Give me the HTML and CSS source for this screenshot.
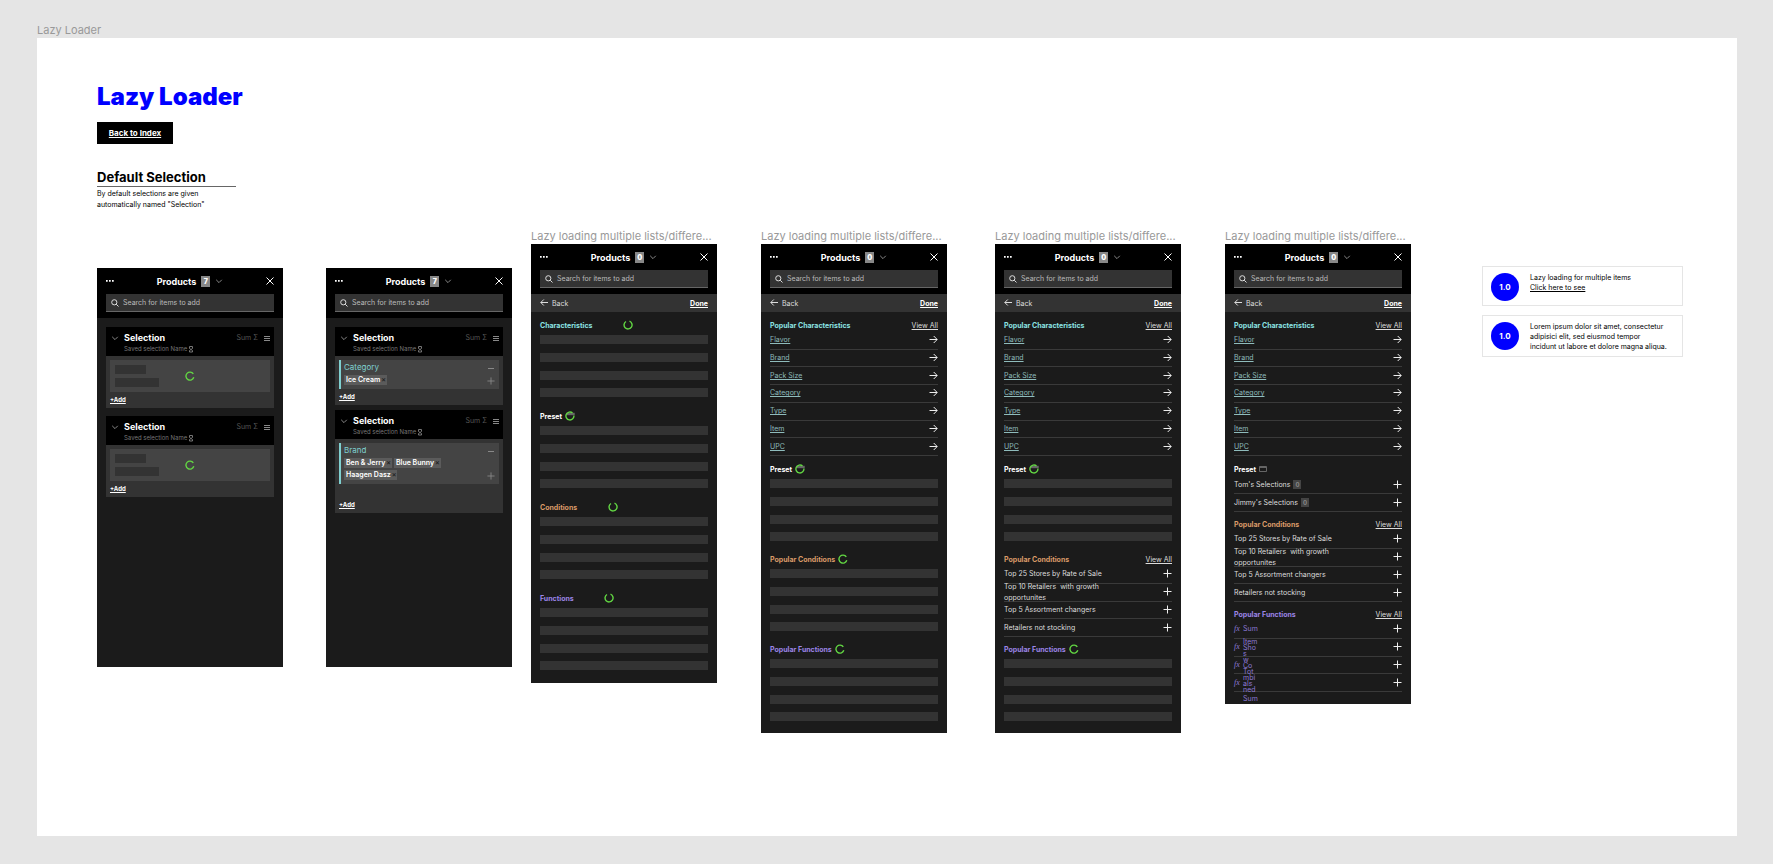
FILE: index.html
```html
<!DOCTYPE html>
<html lang="en">
  <head>
    <meta charset="UTF-8" />
    <meta name="viewport" content="width=device-width, initial-scale=1.0" />
    <title>Lazy Loader</title>
    <link rel="stylesheet" href="styles.css">
  </head>
  <body>
    <!-- Icons -->
    <svg class="sprite" aria-hidden="true">
      <symbol id="dots" viewBox="0 0 8 8"><path d="M0 3h1.700v1.700H0zM3 3h1.700v1.700H3zM6 3h1.700v1.700H6z" fill="currentColor" stroke="none" /></symbol>
      <symbol id="chevron" viewBox="0 0 8 8"><path d="M1.200 2.800 4 5.600l2.800-2.800" /></symbol>
      <symbol id="close" viewBox="0 0 8 8"><path d="M.5.5l7 7M7.500.5l-7 7" /></symbol>
      <symbol id="search" viewBox="0 0 8 8"><circle cx="3.300" cy="3.300" r="2.600" /><path d="M5.200 5.200 7.500 7.500" /></symbol>
      <symbol id="back" viewBox="0 0 8 8"><path d="M8 3.500H.8M3.800.5l-3 3 3 3" /></symbol>
      <symbol id="arrow" viewBox="0 0 9 9"><path d="M.5 4.500h7.500M4.700 1l3.500 3.500L4.700 8" /></symbol>
      <symbol id="plus" viewBox="0 0 9 9"><path d="M4.500.5v8M.5 4.500h8" /></symbol>
      <symbol id="minus" viewBox="0 0 8 8"><path d="M1 4.500h6" /></symbol>
      <symbol id="menu" viewBox="0 0 8 8"><path d="M1 2.500h6M1 4.500h6M1 6.500h6" /></symbol>
      <symbol id="lock" viewBox="0 0 8 8"><path d="M2.500 1.500h3v2l-3 2v1.500h3V5.500l-3-2z" /></symbol>
      <symbol id="window" viewBox="0 0 8 8"><path d="M.5 1.500h7v5h-7zM.5 2.500h7" /></symbol>
      <symbol id="ring-top" viewBox="0 0 10 10"><path d="M6.500 1.200A4 4 0 1 1 3 1.500" /></symbol>
      <symbol id="ring-side" viewBox="0 0 10 10"><path d="M8.800 6.300A4 4 0 1 1 8.300 2.900" /></symbol>
      <symbol id="ring-window" viewBox="0 0 10 10"><path class="dim" d="M2 2.500h7v1H2z" /><path d="M8.900 4.500A4 4 0 1 1 7.500 1.900" /></symbol>
    </svg>

    <p class="frame-label">Lazy Loader</p>
    <main class="board">
      <header class="intro">
        <h1>Lazy Loader</h1>
        <a class="index-link" href="#">Back to Index</a>
        <h2>Default Selection</h2>
        <p>By default selections are given<br>automatically named "Selection"</p>
      </header>

      <div class="frames">
        <!-- Selections loading -->
        <section class="panel short">
          <div class="panel-head">
            <div class="title-row">
              <button aria-label="More"><svg class="icon"><use href="#dots" /></svg></button>
              <span class="title">Products <b class="badge">7</b> <svg class="icon soft"><use href="#chevron" /></svg></span>
              <button aria-label="Close"><svg class="icon"><use href="#close" /></svg></button>
            </div>
            <div class="search"><svg class="icon"><use href="#search" /></svg><input type="text" aria-label="Search" placeholder="Search for items to add" /></div>
          </div>
          <div class="cards loading">
            <article class="card">
              <div class="card-head">
                <svg class="icon soft"><use href="#chevron" /></svg>
                <div class="card-name"><h3>Selection</h3><p>Saved selection Name <svg class="icon"><use href="#lock" /></svg></p></div>
                <span class="sum">Sum Σ</span><svg class="icon soft"><use href="#menu" /></svg>
              </div>
              <div class="card-body">
                <div class="ghost"><i></i><i></i><svg class="spinner"><use href="#ring-side" /></svg></div>
                <a class="add" href="#">+Add</a>
              </div>
            </article>
            <article class="card">
              <div class="card-head">
                <svg class="icon soft"><use href="#chevron" /></svg>
                <div class="card-name"><h3>Selection</h3><p>Saved selection Name <svg class="icon"><use href="#lock" /></svg></p></div>
                <span class="sum">Sum Σ</span><svg class="icon soft"><use href="#menu" /></svg>
              </div>
              <div class="card-body">
                <div class="ghost"><i></i><i></i><svg class="spinner"><use href="#ring-side" /></svg></div>
                <a class="add" href="#">+Add</a>
              </div>
            </article>
          </div>
        </section>

        <!-- Selections loaded -->
        <section class="panel short">
          <div class="panel-head">
            <div class="title-row">
              <button aria-label="More"><svg class="icon"><use href="#dots" /></svg></button>
              <span class="title">Products <b class="badge">7</b> <svg class="icon soft"><use href="#chevron" /></svg></span>
              <button aria-label="Close"><svg class="icon"><use href="#close" /></svg></button>
            </div>
            <div class="search"><svg class="icon"><use href="#search" /></svg><input type="text" aria-label="Search" placeholder="Search for items to add" /></div>
          </div>
          <div class="cards">
            <article class="card">
              <div class="card-head">
                <svg class="icon soft"><use href="#chevron" /></svg>
                <div class="card-name"><h3>Selection</h3><p>Saved selection Name <svg class="icon"><use href="#lock" /></svg></p></div>
                <span class="sum">Sum Σ</span><svg class="icon soft"><use href="#menu" /></svg>
              </div>
              <div class="card-body">
                <div class="group">
                  <div class="group-main">
                    <h4>Category</h4>
                    <div class="chips"><span>Ice Cream <button>×</button></span></div>
                  </div>
                  <div class="group-tools">
                    <button aria-label="Collapse"><svg class="icon"><use href="#minus" /></svg></button>
                    <button aria-label="Add"><svg class="icon"><use href="#plus" /></svg></button>
                  </div>
                </div>
                <a class="add" href="#">+Add</a>
              </div>
            </article>
            <article class="card">
              <div class="card-head">
                <svg class="icon soft"><use href="#chevron" /></svg>
                <div class="card-name"><h3>Selection</h3><p>Saved selection Name <svg class="icon"><use href="#lock" /></svg></p></div>
                <span class="sum">Sum Σ</span><svg class="icon soft"><use href="#menu" /></svg>
              </div>
              <div class="card-body roomy">
                <div class="group">
                  <div class="group-main">
                    <h4>Brand</h4>
                    <div class="chips"><span>Ben &amp; Jerry <button>×</button></span><span>Blue Bunny <button>×</button></span><span>Haagen Dasz <button>×</button></span></div>
                  </div>
                  <div class="group-tools">
                    <button aria-label="Collapse"><svg class="icon"><use href="#minus" /></svg></button>
                    <button aria-label="Add"><svg class="icon"><use href="#plus" /></svg></button>
                  </div>
                </div>
                <a class="add" href="#">+Add</a>
              </div>
            </article>
          </div>
        </section>

        <!-- Everything loading -->
        <div class="frame">
          <p class="frame-label">Lazy loading multiple lists/differe...</p>
          <section class="panel">
            <div class="panel-head">
              <div class="title-row">
                <button aria-label="More"><svg class="icon"><use href="#dots" /></svg></button>
                <span class="title">Products <b class="badge">0</b> <svg class="icon soft"><use href="#chevron" /></svg></span>
                <button aria-label="Close"><svg class="icon"><use href="#close" /></svg></button>
              </div>
              <div class="search"><svg class="icon"><use href="#search" /></svg><input type="text" aria-label="Search" placeholder="Search for items to add" /></div>
            </div>
            <nav class="panel-nav"><button class="back"><svg class="icon"><use href="#back" /></svg>Back</button><button class="done">Done</button></nav>
            <div class="lists pad">
              <section>
                <div class="list-head"><h3 class="teal hold-lg">Characteristics</h3><svg class="spinner"><use href="#ring-top" /></svg></div>
                <div class="rows bars"><i></i><i></i><i></i><i></i></div>
              </section>
              <section>
                <div class="list-head"><h3>Preset</h3><svg class="spinner"><use href="#ring-window" /></svg></div>
                <div class="rows bars"><i></i><i></i><i></i><i></i></div>
              </section>
              <section>
                <div class="list-head"><h3 class="orange hold-md">Conditions</h3><svg class="spinner"><use href="#ring-top" /></svg></div>
                <div class="rows bars"><i></i><i></i><i></i><i></i></div>
              </section>
              <section>
                <div class="list-head"><h3 class="purple hold-sm">Functions</h3><svg class="spinner"><use href="#ring-top" /></svg></div>
                <div class="rows bars"><i></i><i></i><i></i><i></i></div>
              </section>
            </div>
          </section>
        </div>

        <!-- Characteristics ready -->
        <div class="frame">
          <p class="frame-label">Lazy loading multiple lists/differe...</p>
          <section class="panel">
            <div class="panel-head">
              <div class="title-row">
                <button aria-label="More"><svg class="icon"><use href="#dots" /></svg></button>
                <span class="title">Products <b class="badge">0</b> <svg class="icon soft"><use href="#chevron" /></svg></span>
                <button aria-label="Close"><svg class="icon"><use href="#close" /></svg></button>
              </div>
              <div class="search"><svg class="icon"><use href="#search" /></svg><input type="text" aria-label="Search" placeholder="Search for items to add" /></div>
            </div>
            <nav class="panel-nav"><button class="back"><svg class="icon"><use href="#back" /></svg>Back</button><button class="done">Done</button></nav>
            <div class="lists">
              <section>
                <div class="list-head"><h3 class="teal">Popular Characteristics</h3><a href="#">View All</a></div>
                <ul class="rows seven">
                  <li><a href="#">Flavor</a><svg class="icon"><use href="#arrow" /></svg></li>
                  <li><a href="#">Brand</a><svg class="icon"><use href="#arrow" /></svg></li>
                  <li><a href="#">Pack Size</a><svg class="icon"><use href="#arrow" /></svg></li>
                  <li><a href="#">Category</a><svg class="icon"><use href="#arrow" /></svg></li>
                  <li><a href="#">Type</a><svg class="icon"><use href="#arrow" /></svg></li>
                  <li><a href="#">Item</a><svg class="icon"><use href="#arrow" /></svg></li>
                  <li><a href="#">UPC</a><svg class="icon"><use href="#arrow" /></svg></li>
                </ul>
              </section>
              <section>
                <div class="list-head"><h3>Preset</h3><svg class="spinner"><use href="#ring-window" /></svg></div>
                <div class="rows bars"><i></i><i></i><i></i><i></i></div>
              </section>
              <section>
                <div class="list-head"><h3 class="orange">Popular Conditions</h3><svg class="spinner"><use href="#ring-side" /></svg></div>
                <div class="rows bars"><i></i><i></i><i></i><i></i></div>
              </section>
              <section>
                <div class="list-head"><h3 class="purple">Popular Functions</h3><svg class="spinner"><use href="#ring-side" /></svg></div>
                <div class="rows bars"><i></i><i></i><i></i><i></i></div>
              </section>
            </div>
          </section>
        </div>

        <!-- Conditions ready -->
        <div class="frame">
          <p class="frame-label">Lazy loading multiple lists/differe...</p>
          <section class="panel">
            <div class="panel-head">
              <div class="title-row">
                <button aria-label="More"><svg class="icon"><use href="#dots" /></svg></button>
                <span class="title">Products <b class="badge">0</b> <svg class="icon soft"><use href="#chevron" /></svg></span>
                <button aria-label="Close"><svg class="icon"><use href="#close" /></svg></button>
              </div>
              <div class="search"><svg class="icon"><use href="#search" /></svg><input type="text" aria-label="Search" placeholder="Search for items to add" /></div>
            </div>
            <nav class="panel-nav"><button class="back"><svg class="icon"><use href="#back" /></svg>Back</button><button class="done">Done</button></nav>
            <div class="lists">
              <section>
                <div class="list-head"><h3 class="teal">Popular Characteristics</h3><a href="#">View All</a></div>
                <ul class="rows seven">
                  <li><a href="#">Flavor</a><svg class="icon"><use href="#arrow" /></svg></li>
                  <li><a href="#">Brand</a><svg class="icon"><use href="#arrow" /></svg></li>
                  <li><a href="#">Pack Size</a><svg class="icon"><use href="#arrow" /></svg></li>
                  <li><a href="#">Category</a><svg class="icon"><use href="#arrow" /></svg></li>
                  <li><a href="#">Type</a><svg class="icon"><use href="#arrow" /></svg></li>
                  <li><a href="#">Item</a><svg class="icon"><use href="#arrow" /></svg></li>
                  <li><a href="#">UPC</a><svg class="icon"><use href="#arrow" /></svg></li>
                </ul>
              </section>
              <section>
                <div class="list-head"><h3>Preset</h3><svg class="spinner"><use href="#ring-window" /></svg></div>
                <div class="rows bars"><i></i><i></i><i></i><i></i></div>
              </section>
              <section>
                <div class="list-head"><h3 class="orange">Popular Conditions</h3><a href="#">View All</a></div>
                <ul class="rows">
                  <li>Top 25 Stores by Rate of Sale<button aria-label="Add"><svg class="icon"><use href="#plus" /></svg></button></li>
                  <li>Top 10 Retailers&nbsp; with growth<br>opportunites<button aria-label="Add"><svg class="icon"><use href="#plus" /></svg></button></li>
                  <li>Top 5 Assortment changers<button aria-label="Add"><svg class="icon"><use href="#plus" /></svg></button></li>
                  <li>Retailers not stocking<button aria-label="Add"><svg class="icon"><use href="#plus" /></svg></button></li>
                </ul>
              </section>
              <section>
                <div class="list-head"><h3 class="purple">Popular Functions</h3><svg class="spinner"><use href="#ring-side" /></svg></div>
                <div class="rows bars"><i></i><i></i><i></i><i></i></div>
              </section>
            </div>
          </section>
        </div>

        <!-- All lists ready -->
        <div class="frame">
          <p class="frame-label">Lazy loading multiple lists/differe...</p>
          <section class="panel">
            <div class="panel-head">
              <div class="title-row">
                <button aria-label="More"><svg class="icon"><use href="#dots" /></svg></button>
                <span class="title">Products <b class="badge">0</b> <svg class="icon soft"><use href="#chevron" /></svg></span>
                <button aria-label="Close"><svg class="icon"><use href="#close" /></svg></button>
              </div>
              <div class="search"><svg class="icon"><use href="#search" /></svg><input type="text" aria-label="Search" placeholder="Search for items to add" /></div>
            </div>
            <nav class="panel-nav"><button class="back"><svg class="icon"><use href="#back" /></svg>Back</button><button class="done">Done</button></nav>
            <div class="lists flush">
              <section>
                <div class="list-head"><h3 class="teal">Popular Characteristics</h3><a href="#">View All</a></div>
                <ul class="rows seven">
                  <li><a href="#">Flavor</a><svg class="icon"><use href="#arrow" /></svg></li>
                  <li><a href="#">Brand</a><svg class="icon"><use href="#arrow" /></svg></li>
                  <li><a href="#">Pack Size</a><svg class="icon"><use href="#arrow" /></svg></li>
                  <li><a href="#">Category</a><svg class="icon"><use href="#arrow" /></svg></li>
                  <li><a href="#">Type</a><svg class="icon"><use href="#arrow" /></svg></li>
                  <li><a href="#">Item</a><svg class="icon"><use href="#arrow" /></svg></li>
                  <li><a href="#">UPC</a><svg class="icon"><use href="#arrow" /></svg></li>
                </ul>
              </section>
              <section>
                <div class="list-head"><h3>Preset</h3><svg class="icon dim"><use href="#window" /></svg></div>
                <ul class="rows two">
                  <li>Tom's Selections<b class="count">0</b><button aria-label="Add"><svg class="icon"><use href="#plus" /></svg></button></li>
                  <li>Jimmy's Selections<b class="count">0</b><button aria-label="Add"><svg class="icon"><use href="#plus" /></svg></button></li>
                </ul>
              </section>
              <section>
                <div class="list-head"><h3 class="orange">Popular Conditions</h3><a href="#">View All</a></div>
                <ul class="rows">
                  <li>Top 25 Stores by Rate of Sale<button aria-label="Add"><svg class="icon"><use href="#plus" /></svg></button></li>
                  <li>Top 10 Retailers&nbsp; with growth<br>opportunites<button aria-label="Add"><svg class="icon"><use href="#plus" /></svg></button></li>
                  <li>Top 5 Assortment changers<button aria-label="Add"><svg class="icon"><use href="#plus" /></svg></button></li>
                  <li>Retailers not stocking<button aria-label="Add"><svg class="icon"><use href="#plus" /></svg></button></li>
                </ul>
              </section>
              <section class="functions">
                <div class="list-head"><h3 class="purple">Popular Functions</h3><a href="#">View All</a></div>
                <ul class="rows">
                  <li><em>fx</em>Sum<button aria-label="Add"><svg class="icon"><use href="#plus" /></svg></button></li>
                  <li><em>fx</em><button aria-label="Add"><svg class="icon"><use href="#plus" /></svg></button></li>
                  <li><em>fx</em><button aria-label="Add"><svg class="icon"><use href="#plus" /></svg></button></li>
                  <li><em>fx</em><button aria-label="Add"><svg class="icon"><use href="#plus" /></svg></button></li>
                </ul>
                <div class="stacked"><span>Item</span><span>Sho</span><span>s</span><span>w</span><span>Co</span><span>Tot</span><span>mbi</span><span>als</span><span>ned</span></div>
                <p class="last">Sum</p>
              </section>
            </div>
          </section>
        </div>

        <!-- Notes -->
        <aside class="notes">
          <div class="note"><b>1.0</b><p>Lazy loading for multiple items<br><a href="#">Click here to see</a></p></div>
          <div class="note"><b>1.0</b><p>Lorem ipsum dolor sit amet, consectetur<br>adipisici elit, sed eiusmod tempor<br>incidunt ut labore et dolore magna aliqua.</p></div>
        </aside>
      </div>
    </main>
  </body>
</html>
```
FILE: styles.css
```css
* {
  box-sizing: border-box;
  margin: 0;
  padding: 0;
}

body {
  padding: 22px 36px 28px 37px;
  background: #e5e5e5;
  font: 7px/11px Inter, "Liberation Sans", sans-serif;
}

a {
  color: inherit;
}

button {
  display: flex;
  align-items: center;
  border: 0;
  background: none;
  color: inherit;
  font: inherit;
  cursor: pointer;
}

ul {
  list-style: none;
}

.sprite {
  position: absolute;
  width: 0;
  height: 0;
}

.icon,
.spinner {
  flex: none;
  width: 8px;
  height: 8px;
  fill: none;
  stroke: currentColor;
}

.spinner {
  width: 10px;
  height: 10px;
  color: #62d643;
  stroke-width: 1.4;
}

.dim {
  stroke: #666;
}

.soft {
  color: #888;
}

.frame-label {
  height: 16px;
  color: #999;
  font-size: 11px;
  line-height: 17px;
  white-space: nowrap;
}

.board {
  min-height: calc(100vh - 66px);
  padding: 45px 54px 20px 60px;
  background: #fff;
}

/* Page intro */
.intro {
  height: 145px;
}

.intro h1 {
  color: #00f;
  font-size: 24px;
  font-weight: 900;
  line-height: 28px;
}

.index-link {
  display: flex;
  align-items: center;
  justify-content: center;
  width: 76px;
  height: 22px;
  margin: 11px 0 25px;
  background: #000;
  color: #fff;
  font-size: 8px;
  font-weight: 700;
}

.intro h2 {
  width: 139px;
  border-bottom: 1px solid #666;
  font-size: 13px;
  font-weight: 700;
  line-height: 17px;
}

.intro p {
  padding-top: 1px;
}

/* Frames */
.frames {
  display: grid;
  grid-template-columns: 229fr 205fr 230fr 234fr 230fr 257fr 201fr;
  align-items: start;
}

.panel {
  width: 186px;
  background: #1b1b1b;
  color: #ddd;
}

.panel.short {
  min-height: 399px;
  margin-top: 40px;
}

.panel-head {
  height: 50px;
  padding: 0 9px;
  background: #000;
}

.title-row {
  display: flex;
  align-items: center;
  justify-content: space-between;
  height: 26px;
  color: #fff;
}

.title {
  display: flex;
  align-items: center;
  gap: 5px;
  font-size: 9px;
  font-weight: 700;
}

.badge {
  width: 9px;
  height: 11px;
  background: #888;
  font-size: 7px;
  text-align: center;
}

.search {
  position: relative;
}

.search .icon {
  position: absolute;
  top: 5px;
  left: 5px;
}

.search input {
  display: block;
  width: 100%;
  height: 18px;
  padding-left: 17px;
  border: 0;
  border-bottom: 1px solid #666;
  background: #333;
  color: #ddd;
  font: inherit;
}

.search input::placeholder {
  color: #bbb;
}

.panel-nav {
  display: flex;
  justify-content: space-between;
  height: 18px;
  padding: 0 9px;
  background: #333;
}

.back {
  gap: 4px;
}

.done {
  color: #fff;
  font-weight: 700;
  text-decoration: underline;
}

/* Selection cards */
.cards {
  display: grid;
  gap: 5px;
  padding: 9px;
}

.cards.loading {
  gap: 8px;
}

.card {
  background: #333;
}

.card-head {
  display: flex;
  gap: 5px;
  height: 29px;
  padding: 5px 3px 0 5px;
  background: #000;
  color: #777;
}

.card-head > .icon,
.sum {
  margin-top: 2px;
}

.card-name {
  flex: 1;
}

.card-name h3 {
  color: #fff;
  font-size: 9px;
  line-height: 11px;
}

.card-name p {
  display: flex;
  align-items: center;
  font-size: 6px;
}

.sum {
  color: #555;
  line-height: 8px;
}

.card-body {
  padding: 4px 4px 3px;
}

.card-body.roomy .add {
  margin-top: 15px;
}

.ghost {
  position: relative;
  height: 32px;
  padding: 5px;
  background: #444;
}

.ghost i {
  display: block;
  width: 31px;
  height: 9px;
  background: #333;
}

.ghost i + i {
  width: 44px;
  margin-top: 4px;
}

.ghost .spinner {
  position: absolute;
  top: 11px;
  left: 75px;
}

.add {
  display: block;
  margin-top: 2px;
  color: #fff;
  font-size: 6px;
  font-weight: 700;
}

.group {
  display: flex;
  justify-content: space-between;
  padding: 2px 3px 4px;
  border-left: 2px solid #7fd0d0;
  background: #444;
}

.group h4 {
  margin-bottom: 2px;
  color: #7fd0d0;
  font-size: 8px;
  font-weight: 400;
}

.chips {
  display: flex;
  flex-wrap: wrap;
  gap: 2px;
}

.chips span {
  display: flex;
  gap: 1px;
  height: 10px;
  padding: 0 1px 0 2px;
  background: #5b5b5b;
  color: #fff;
  font-size: 7px;
  font-weight: 600;
  line-height: 10px;
}

.chips button {
  color: #222;
}

.group-tools {
  display: flex;
  flex-direction: column;
  justify-content: space-between;
  padding: 2px 1px 0 0;
  color: #888;
}

/* Item lists */
.lists {
  display: grid;
  gap: 5px;
  padding: 6px 9px;
}

.lists.pad {
  gap: 6px;
  padding-bottom: 7px;
}

.lists.flush {
  padding-bottom: 0;
}

.list-head {
  display: flex;
  align-items: center;
  gap: 3px;
  height: 14px;
}

.list-head h3 {
  color: #fff;
  font-size: 7px;
}

.list-head .teal {
  color: #8be3e3;
}

.list-head .orange {
  color: #dc9c69;
}

.list-head .purple {
  color: #9c86e8;
}

.list-head a {
  margin-left: auto;
}

/* keep the spinner where the full heading will end */
.hold-lg {
  width: 80px;
}

.hold-md {
  width: 65px;
}

.hold-sm {
  width: 61px;
}

.rows {
  display: grid;
  grid-auto-rows: minmax(0, 1fr);
  height: 71px;
}

.rows.seven {
  height: 124px;
  margin-bottom: 1px;
}

.rows.two {
  height: 36px;
}

.rows li {
  display: flex;
  align-items: center;
  padding-bottom: 1px;
  border-bottom: 1px solid #3a3a3a;
}

.rows li a {
  color: #8fbcbc;
}

.rows li > .icon,
.rows li > button {
  margin-left: auto;
  color: #eee;
}

.rows .icon {
  width: 9px;
  height: 9px;
}

.bars i {
  height: 9px;
  margin-top: 3px;
  background: #333;
}

.count {
  width: 8px;
  height: 9px;
  margin-left: 3px;
  background: #444;
  color: #888;
  font-size: 6px;
  line-height: 9px;
  text-align: center;
}

.functions {
  position: relative;
  color: #8d7ad6;
}

.functions .list-head a {
  color: #ddd;
}

.functions em {
  width: 9px;
  font-family: "Liberation Serif", serif;
  font-size: 8px;
}

.stacked {
  position: absolute;
  top: 32px;
  left: 9px;
  display: flex;
  flex-direction: column;
  height: 52px;
}

.stacked span {
  flex: 1;
  line-height: 6px;
}

.last {
  height: 12px;
  padding-left: 9px;
  line-height: 14px;
}

/* Notes */
.notes {
  display: grid;
  gap: 9px;
  margin-top: 38px;
}

.note {
  display: flex;
  gap: 11px;
  min-height: 40px;
  padding: 6px 0 4px 8px;
  border: 1px solid #e5e5e5;
}

.note b {
  flex: none;
  width: 28px;
  height: 28px;
  border-radius: 50%;
  background: #00f;
  color: #fff;
  font-size: 8px;
  line-height: 28px;
  text-align: center;
}

.note p {
  line-height: 10px;
  white-space: nowrap;
}
```
